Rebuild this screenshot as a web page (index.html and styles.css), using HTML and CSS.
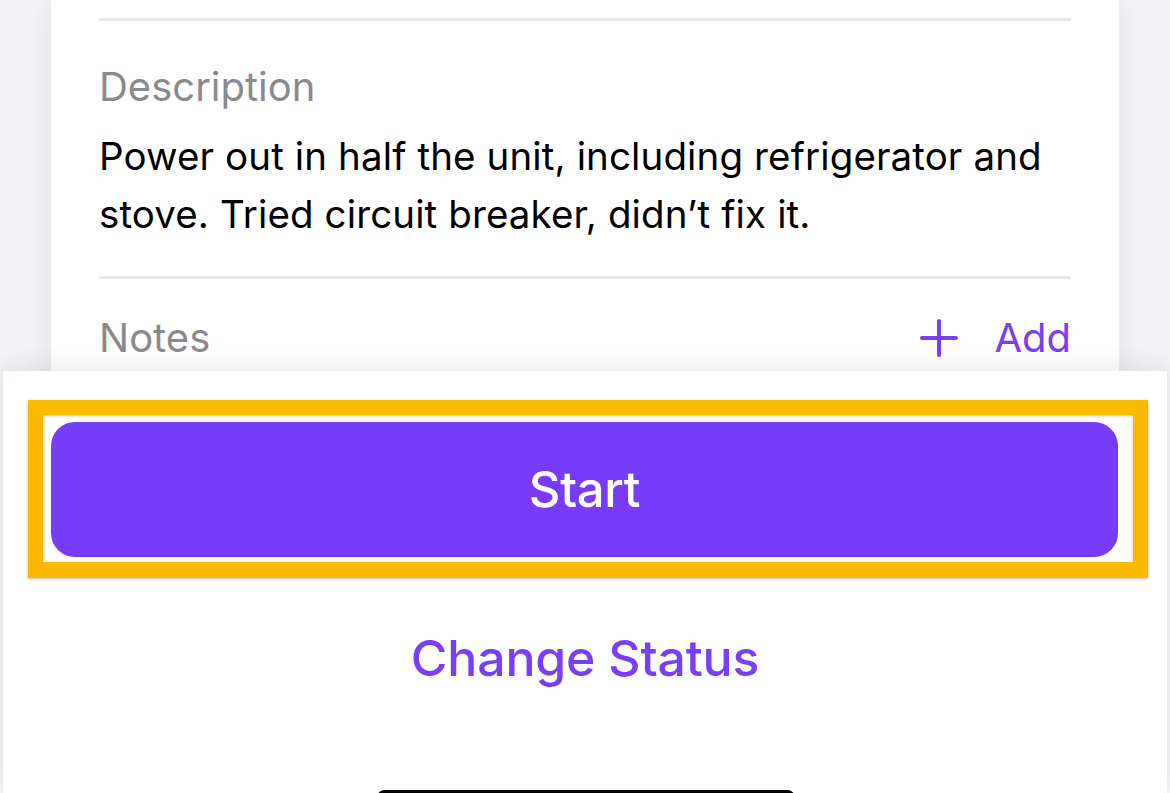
FILE: index.html
```html
<!DOCTYPE html>
<html lang="en">
<head>
<meta charset="utf-8">
<title>Work order</title>
<link rel="stylesheet" href="styles.css">
</head>
<body>
<div class="screen">
  <main class="card">
    <div class="divider"></div>
    <section class="field">
      <div class="label">Description</div>
      <p class="value">Power out in half the unit, including refrigerator and stove. Tried circuit breaker, didn’t fix it.</p>
    </section>
    <div class="divider divider-2"></div>
    <section class="notes-row">
      <div class="label">Notes</div>
      <div class="add">
        <svg class="plus" width="38" height="38" viewBox="0 0 38 38" aria-hidden="true">
          <path d="M19 2 V36 M2 19 H36" stroke="currentColor" stroke-width="4" stroke-linecap="round" fill="none"/>
        </svg>
        <span>Add</span>
      </div>
    </section>
  </main>
  <div class="sheet">
    <div class="highlight">
      <button class="start">Start</button>
    </div>
    <div class="change">Change Status</div>
    <div class="home-indicator"></div>
  </div>
</div>
</body>
</html>
```
FILE: styles.css
```css
* { box-sizing: border-box; }
html, body {
  margin: 0;
  padding: 0;
  height: 793px;
  overflow: hidden;
  background: #f2f2f7;
  font-family: Inter, "Liberation Sans", Arial, sans-serif;
}
.screen {
  position: relative;
  width: 1170px;
  height: 793px;
  overflow: hidden;
}
.card {
  margin-left: 51px;
  width: 1068px;
  height: 793px;
  background: #ffffff;
  padding: 18px 48px 0 48px;
  box-shadow: 0 0 28px rgba(0, 0, 0, 0.07);
}
.divider {
  height: 3px;
  background: #e6e6eb;
}
.field {
  padding-top: 43px;
}
.label {
  font-size: 40px;
  line-height: 46px;
  color: #8a8a8e;
  letter-spacing: 0;
}
.value {
  margin: 17px 0 0 0;
  font-size: 38.5px;
  line-height: 58px;
  color: #000;
  letter-spacing: 0.12px;
}
.divider-2 {
  margin-top: 33px;
}
.notes-row {
  margin-top: 36px;
  display: flex;
  justify-content: space-between;
  align-items: center;
}
.add {
  display: flex;
  align-items: center;
  gap: 36px;
  color: #7a3ef4;
  font-size: 40px;
  line-height: 46px;
}
.plus {
  display: block;
}
.sheet {
  position: absolute;
  top: 371px;
  left: 3px;
  right: 3px;
  bottom: 0;
  background: #ffffff;
  box-shadow: 0 -6px 22px rgba(0, 0, 0, 0.08);
  display: flex;
  flex-direction: column;
  align-items: flex-start;
}
.highlight {
  margin: 29px 0 0 25px;
  width: 1120px;
  height: 178px;
  border: 15px solid #fbb900;
  border-bottom-width: 16px;
  padding: 7px 15px 5px 8px;
  box-shadow: 0 1px 3px rgba(0, 0, 0, 0.25), inset 0 1px 3px rgba(0, 0, 0, 0.25);
  background: #ffffff;
}
.start {
  display: block;
  width: 100%;
  height: 100%;
  border: 0;
  border-radius: 24px;
  background: #773bfa;
  color: #ffffff;
  font-family: Inter, "Liberation Sans", Arial, sans-serif;
  font-size: 49px;
  font-weight: 500;
  letter-spacing: -0.3px;
  padding: 0;
}
.change {
  align-self: center;
  margin-top: 50px;
  font-size: 50px;
  line-height: 60px;
  font-weight: 500;
  color: #7a3ef4;
  letter-spacing: -0.2px;
}
.home-indicator {
  align-self: center;
  margin-top: auto;
  margin-bottom: -12px;
  margin-left: 2px;
  width: 418px;
  height: 15px;
  border-radius: 8px;
  background: #000;
}
```
